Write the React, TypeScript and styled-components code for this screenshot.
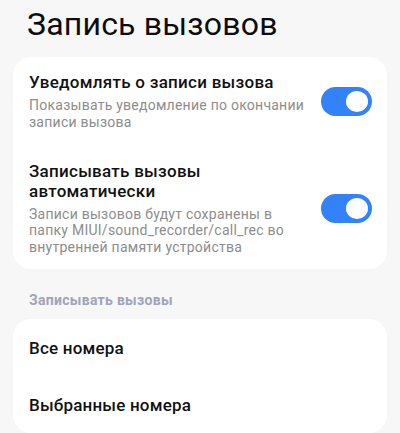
import React, {useState} from "react";
import styled, {createGlobalStyle} from "styled-components";

const GlobalStyle = createGlobalStyle`
  html, body {
    margin: 0;
    padding: 0;
    background: #f7f7f7;
  }
  body {
    font-family: Roboto, "Noto Sans", sans-serif;
    -webkit-font-smoothing: antialiased;
  }
`;

type ToggleRow = {
	title: string;
	description: string;
};

const toggleRows: ToggleRow[] = [
	{
		title: "Уведомлять о записи вызова",
		description: "Показывать уведомление по окончании записи вызова",
	},
	{
		title: "Записывать вызовы автоматически",
		description: "Записи вызовов будут сохранены в папку MIUI/sound_recorder/call_rec во внутренней памяти устройства",
	},
];

const choices = ["Все номера", "Выбранные номера"];

export default function App() {
	const [enabled, setEnabled] = useState<boolean[]>([true, true]);

	const flip = (idx: number) =>
		setEnabled((prev) => prev.map((v, i) => (i === idx ? !v : v)));

	return (
		<>
			<GlobalStyle/>
			<Page>
				<PageTitle>Запись вызовов</PageTitle>
				<Card>
					{toggleRows.map((row, idx) => (
						<SettingRow key={idx}>
							<SettingText>
								<SettingTitle>{row.title}</SettingTitle>
								<SettingDescription>{row.description}</SettingDescription>
							</SettingText>
							<Switch on={enabled[idx]} onClick={() => flip(idx)} aria-pressed={enabled[idx]}>
								<Knob on={enabled[idx]}/>
							</Switch>
						</SettingRow>
					))}
				</Card>
				<SectionLabel>Записывать вызовы</SectionLabel>
				<Card>
					{choices.map((c) => (
						<ChoiceRow key={c}>{c}</ChoiceRow>
					))}
				</Card>
			</Page>
		</>
	);
}

const Page = styled.div`
  width: 400px;
  height: 433px;
  overflow: hidden;
  padding: 0 13px;
  box-sizing: border-box;
  display: flex;
  flex-direction: column;
`;

const PageTitle = styled.h1`
  margin: 0;
  padding: 2px 0 0 14px;
  font-size: 32px;
  font-weight: 400;
  line-height: 44px;
  color: #0d0d0d;
  letter-spacing: 0.2px;
`;

const Card = styled.div`
  margin-top: 11px;
  background: #ffffff;
  border-radius: 18px;
  flex-shrink: 0;
`;

const SettingRow = styled.div`
  display: flex;
  align-items: center;
  gap: 12px;
  padding: 16px 15px 16px 16px;

  &:last-child {
    padding-bottom: 14px;
  }
`;

const SettingText = styled.div`
  flex: 1;
  min-width: 0;
`;

const SettingTitle = styled.div`
  font-size: 17px;
  font-weight: 500;
  line-height: 19.5px;
  letter-spacing: 0.27px;
  color: #111111;
`;

const SettingDescription = styled.div`
  margin-top: 4.5px;
  font-size: 14px;
  line-height: 16.5px;
  letter-spacing: 0.25px;
  color: #8d8d8d;
`;

const Switch = styled.button<{ on: boolean }>`
  position: relative;
  flex-shrink: 0;
  width: 51px;
  height: 29px;
  padding: 0;
  border: none;
  border-radius: 15px;
  background: ${(p) => (p.on ? "#3482fa" : "#e0e0e0")};
  cursor: pointer;
`;

const Knob = styled.span<{ on: boolean }>`
  position: absolute;
  top: 4px;
  left: ${(p) => (p.on ? "25px" : "4px")};
  width: 22px;
  height: 21px;
  border-radius: 50%;
  background: #ffffff;
`;

const SectionLabel = styled.div`
  margin-top: 23px;
  padding-left: 16px;
  font-size: 14px;
  font-weight: 700;
  line-height: 16px;
  letter-spacing: 0.3px;
  color: #a0a4b8;
`;

const ChoiceRow = styled.div`
  display: flex;
  align-items: center;
  height: 57px;
  padding: 0 16px;
  font-size: 17px;
  font-weight: 500;
  letter-spacing: 0.2px;
  color: #111111;
`;
